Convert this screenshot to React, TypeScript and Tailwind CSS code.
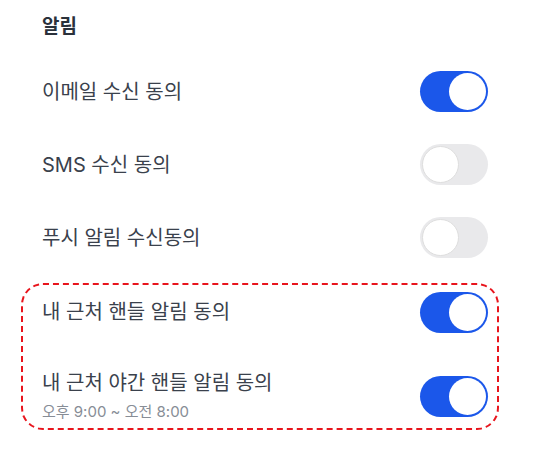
import React, { useState } from 'react';

const Toggle: React.FC<{ on: boolean; onChange: () => void }> = ({ on, onChange }) => (
  <button
    onClick={onChange}
    className={`flex h-[41px] w-[68px] shrink-0 items-center rounded-full p-[2px] ${
      on ? 'justify-end bg-[#1b57ea]' : 'justify-start bg-[#e9e9eb]'
    }`}
  >
    <span
      className={`block h-[37px] w-[37px] rounded-full bg-white ${on ? '' : 'border border-[#dedede]'}`}
    ></span>
  </button>
);

const Row: React.FC<{ label: string; on: boolean; onChange: () => void }> = ({ label, on, onChange }) => (
  <div className="flex h-[73px] items-center justify-between pl-[21px] pr-[11px]">
    <span className="text-[20px] text-[#3a414c]">{label}</span>
    <Toggle on={on} onChange={onChange} />
  </div>
);

export default function App() {
  const [state, setState] = useState({
    email: true,
    sms: false,
    push: false,
    nearby: true,
    night: true,
  });
  const flip = (k: keyof typeof state) => setState((s) => ({ ...s, [k]: !s[k] }));

  return (
    <div
      className="h-[454px] w-[539px] bg-white pl-[21px] pr-[40px]"
      style={{ fontFamily: '"Inter", "Noto Sans CJK KR", sans-serif' }}
    >
      <div className="flex h-[55px] items-center pl-[21px]">
        <h2 className="text-[19px] font-bold text-[#2a313b]">알림</h2>
      </div>
      <Row label="이메일 수신 동의" on={state.email} onChange={() => flip('email')} />
      <Row label="SMS 수신 동의" on={state.sms} onChange={() => flip('sms')} />
      <Row label="푸시 알림 수신동의" on={state.push} onChange={() => flip('push')} />

      <div className="mt-[9px] rounded-[22px] border-2 border-dashed border-[#e8141c] pl-[19px] pr-[9px]">
        <div className="flex h-[54px] items-center justify-between">
          <span className="text-[20px] text-[#3a414c]">내 근처 핸들 알림 동의</span>
          <Toggle on={state.nearby} onChange={() => flip('nearby')} />
        </div>
        <div className="flex items-center justify-between pt-[31px] pb-[6px]">
          <div className="flex flex-col">
            <span className="text-[20px] leading-[26px] text-[#3a414c]">내 근처 야간 핸들 알림 동의</span>
            <span className="mt-[6px] text-[15px] leading-[20px] text-[#878d96]">오후 9:00 ~ 오전 8:00</span>
          </div>
          <Toggle on={state.night} onChange={() => flip('night')} />
        </div>
      </div>
    </div>
  );
}
